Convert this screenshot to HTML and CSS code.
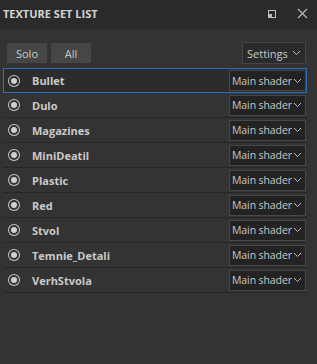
FILE: index.html
```html
<!DOCTYPE html>
<html lang="en">
<head>
  <meta charset="UTF-8">
  <title>Texture Set List</title>
  <link rel="stylesheet" href="styles.css">
</head>
<body>
  <div class="panel">
    <div class="panel-header">
      <div class="panel-title">TEXTURE SET LIST</div>
      <div class="header-icons">
        <svg class="icon-float" width="10" height="10" viewBox="0 0 10 10">
          <rect x="1.5" y="1.5" width="7" height="7" fill="none" stroke="#bdbdbd" stroke-width="1"></rect>
          <rect x="2" y="5" width="3" height="3" fill="#bdbdbd"></rect>
        </svg>
        <svg class="icon-close" width="11" height="11" viewBox="0 0 11 11">
          <path d="M1 1 L10 10 M10 1 L1 10" stroke="#bdbdbd" stroke-width="1.1"></path>
        </svg>
      </div>
    </div>
    <div class="toolbar">
      <button class="tool-btn">Solo</button>
      <button class="tool-btn all-btn">All</button>
      <button class="settings-btn">Settings
        <svg width="9" height="6" viewBox="0 0 9 6"><path d="M1 1 L4.5 4.5 L8 1" fill="none" stroke="#bbb" stroke-width="1"></path></svg>
      </button>
    </div>
    <div class="set-list">
      <div class="set-row selected">
        <span class="radio"></span><span class="set-name">Bullet</span>
        <div class="shader-select">Main shader<svg width="9" height="6" viewBox="0 0 9 6"><path d="M1 1 L4.5 4.5 L8 1" fill="none" stroke="#bbb" stroke-width="1"></path></svg></div>
      </div>
      <div class="set-row">
        <span class="radio"></span><span class="set-name">Dulo</span>
        <div class="shader-select">Main shader<svg width="9" height="6" viewBox="0 0 9 6"><path d="M1 1 L4.5 4.5 L8 1" fill="none" stroke="#bbb" stroke-width="1"></path></svg></div>
      </div>
      <div class="set-row">
        <span class="radio"></span><span class="set-name">Magazines</span>
        <div class="shader-select">Main shader<svg width="9" height="6" viewBox="0 0 9 6"><path d="M1 1 L4.5 4.5 L8 1" fill="none" stroke="#bbb" stroke-width="1"></path></svg></div>
      </div>
      <div class="set-row">
        <span class="radio"></span><span class="set-name">MiniDeatil</span>
        <div class="shader-select">Main shader<svg width="9" height="6" viewBox="0 0 9 6"><path d="M1 1 L4.5 4.5 L8 1" fill="none" stroke="#bbb" stroke-width="1"></path></svg></div>
      </div>
      <div class="set-row">
        <span class="radio"></span><span class="set-name">Plastic</span>
        <div class="shader-select">Main shader<svg width="9" height="6" viewBox="0 0 9 6"><path d="M1 1 L4.5 4.5 L8 1" fill="none" stroke="#bbb" stroke-width="1"></path></svg></div>
      </div>
      <div class="set-row">
        <span class="radio"></span><span class="set-name">Red</span>
        <div class="shader-select">Main shader<svg width="9" height="6" viewBox="0 0 9 6"><path d="M1 1 L4.5 4.5 L8 1" fill="none" stroke="#bbb" stroke-width="1"></path></svg></div>
      </div>
      <div class="set-row">
        <span class="radio"></span><span class="set-name">Stvol</span>
        <div class="shader-select">Main shader<svg width="9" height="6" viewBox="0 0 9 6"><path d="M1 1 L4.5 4.5 L8 1" fill="none" stroke="#bbb" stroke-width="1"></path></svg></div>
      </div>
      <div class="set-row">
        <span class="radio"></span><span class="set-name">Temnie_Detali</span>
        <div class="shader-select">Main shader<svg width="9" height="6" viewBox="0 0 9 6"><path d="M1 1 L4.5 4.5 L8 1" fill="none" stroke="#bbb" stroke-width="1"></path></svg></div>
      </div>
      <div class="set-row">
        <span class="radio"></span><span class="set-name">VerhStvola</span>
        <div class="shader-select">Main shader<svg width="9" height="6" viewBox="0 0 9 6"><path d="M1 1 L4.5 4.5 L8 1" fill="none" stroke="#bbb" stroke-width="1"></path></svg></div>
      </div>
    </div>
  </div>
</body>
</html>
```

FILE: styles.css
```css
body, html {
  margin: 0;
  padding: 0;
  height: 100%;
  background-color: #333333;
  font-family: 'Open Sans', 'Liberation Sans', sans-serif;
  color: #c8c8c8;
}
.panel {
  display: flex;
  flex-direction: column;
  height: 100%;
}
.panel-header {
  height: 29px;
  background-color: #2a2a2a;
  display: flex;
  align-items: center;
  justify-content: space-between;
  padding: 0 9px 0 3px;
}
.panel-title {
  font-size: 11px;
  font-weight: bold;
  color: #d4d4d4;
  margin-top: -2px;
}
.header-icons {
  display: flex;
  align-items: center;
  gap: 20px;
  margin-top: -2px;
}
.toolbar {
  display: flex;
  align-items: center;
  padding: 13px 11px 0 7px;
  height: 22px;
}
.tool-btn {
  font-family: inherit;
  font-size: 11px;
  color: #c8c8c8;
  background-color: #464646;
  border: none;
  width: 40px;
  height: 20px;
  padding: 0;
  margin-right: 4px;
}
.settings-btn {
  margin-left: auto;
  font-family: inherit;
  font-size: 11px;
  color: #c8c8c8;
  background-color: #2b2b2b;
  border: 1px solid #454545;
  height: 22px;
  width: 64px;
  padding: 0 0 0 4px;
  display: flex;
  align-items: center;
  gap: 4px;
  white-space: nowrap;
}
.set-list {
  margin: 4px 10px 0 3px;
}
.set-row {
  display: flex;
  align-items: center;
  height: 24px;
  border-bottom: 1px solid #262626;
  padding-right: 1px;
}
.set-row.selected {
  height: 23px;
  border: 1px solid #2e6fb5;
  background-color: #2c2c2c;
  padding-right: 0;
}
.radio {
  width: 6px;
  height: 6px;
  border-radius: 50%;
  background-color: #d0d0d0;
  box-shadow: 0 0 0 2px #333, 0 0 0 3px #c8c8c8;
  margin: 0 15px 0 8px;
}
.selected .radio {
  margin-left: 7px;
  box-shadow: 0 0 0 2px #2c2c2c, 0 0 0 3px #c8c8c8;
}
.set-name {
  font-size: 11px;
  font-weight: bold;
  color: #c9c9c9;
}
.shader-select {
  margin-left: auto;
  display: flex;
  align-items: center;
  height: 19px;
  width: 73px;
  padding-left: 2px;
  background-color: #232323;
  border: 1px solid #474747;
  font-size: 10.5px;
  letter-spacing: -0.1px;
  color: #c8c8c8;
  white-space: nowrap;
}
.shader-select svg {
  margin-left: 1px;
  flex-shrink: 0;
}
```
